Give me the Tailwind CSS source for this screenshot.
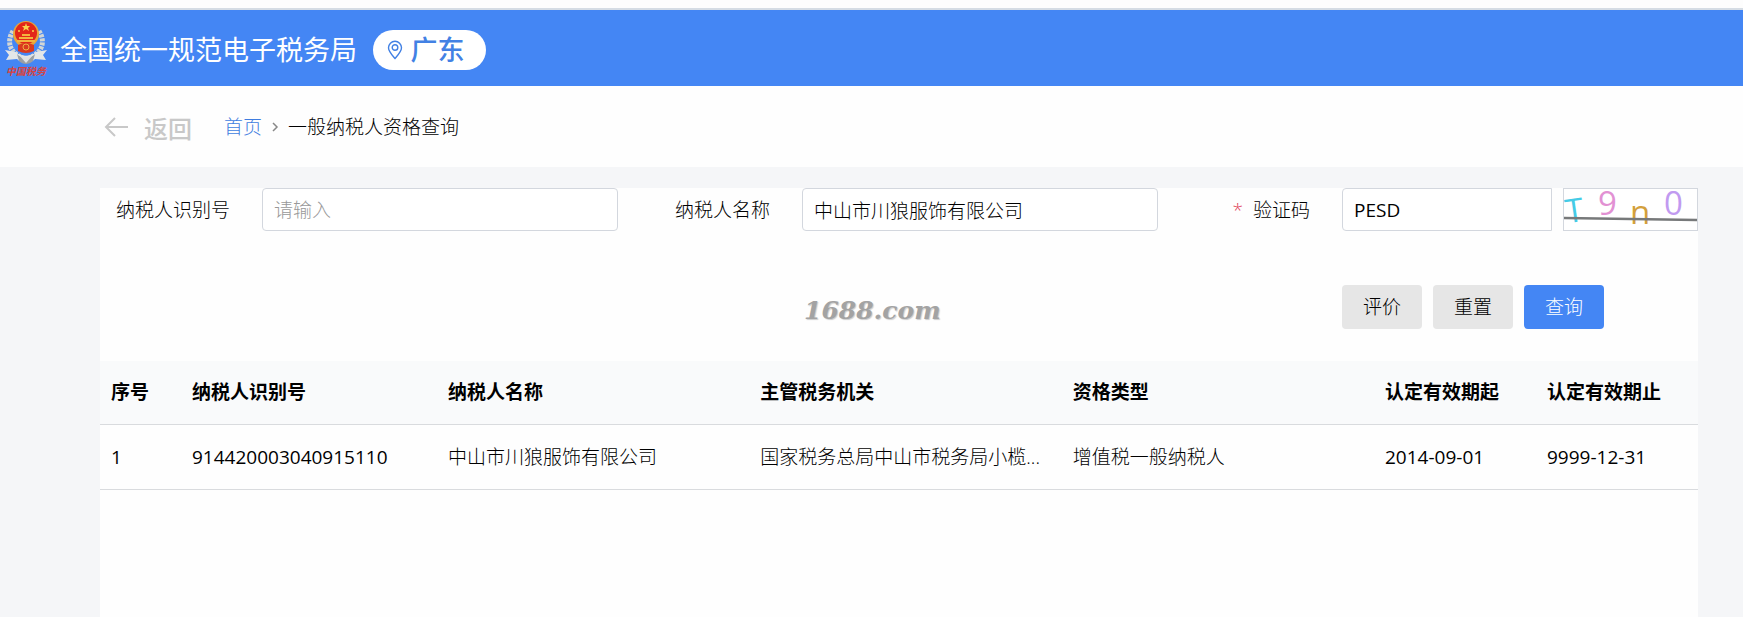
<!DOCTYPE html>
<html lang="zh-CN">
<head>
    <meta charset="UTF-8">
    <meta name="viewport" content="width=device-width, initial-scale=1">
    <title>一般纳税人资格查询</title>
    <script src="https://cdn.jsdelivr.net/npm/@tailwindcss/browser@4"></script>
</head>
<body class="min-h-screen flex flex-col bg-[#f5f6f8] font-['Open_Sans','Noto_Sans_CJK_SC',sans-serif] text-[19px] leading-7 text-black">
    <!-- 顶部 -->
    <header class="border-t-8 border-[#fdfdfd]">
        <div class="flex items-center h-[78px] pt-1 pl-1 border-t-2 border-[#d5dce4] bg-[#4486f4] text-white">
            <svg class="w-11 h-[60px] shrink-0 overflow-visible" viewBox="0 3 44 60" role="img" aria-label="中国税务">
                <g fill="none" stroke="#d3d6d4" stroke-width="5" stroke-dasharray="3 1">
                    <path d="M9 14C2 25 6 36 19 41"/>
                    <path d="M35 14C42 25 38 36 25 41"/>
                </g>
                <path d="M1 33l11 2c4 5 16 5 20 0l11-2-4 5 3 5-11-1c-5 5-13 5-18 0L2 43l3-5z" fill="#e4e7e8"/>
                <path d="M13 37c5 5 13 5 18 0l-2 7c-4 4-10 4-14 0z" fill="#9a9fa3"/>
                <path d="M15 38q7 4 14 0l-7 8z" fill="#dfe2e3"/>
                <circle cx="22" cy="17" r="13" fill="#e8a43a"/>
                <circle cx="22" cy="16" r="11" fill="#e32619"/>
                <path d="M22 6l1 3h3l-2 2 1 3-3-2-3 2 1-3-2-2h3z" fill="#f9d34c"/>
                <path d="M15 20h14v2H15zM18 17h8v2h-8zM13 23h18v2H13z" fill="#f3b33e"/>
                <circle cx="15" cy="14" r="1" fill="#f9d34c"/>
                <circle cx="29" cy="14" r="1" fill="#f9d34c"/>
                <path d="M14 28q8-4 16 0v6q-8 4-16 0z" fill="#d93a20"/>
                <circle cx="22" cy="30" r="3" fill="none" stroke="#f0b142"/>
                <text x="22" y="58" text-anchor="middle" font-size="10" font-weight="700" font-style="italic" fill="#d8433f">中国税务</text>
            </svg>
            <h1 class="ml-3 text-[27px] leading-10 whitespace-nowrap">全国统一规范电子税务局</h1>
            <button type="button" class="ml-4 h-10 w-[113px] pr-2 flex items-center justify-center gap-2 rounded-full bg-white text-[27px] font-medium text-[#4281e4]">
                <svg class="w-4 h-5" viewBox="0 0 16 20" fill="none" stroke="currentColor" stroke-width="1.4" aria-hidden="true">
                    <path d="M8 18.500C5 15 1.500 11.500 1.500 7.800a6.500 6.500 0 0 1 13 0C14.500 11.500 11 15 8 18.500z"/>
                    <circle cx="8" cy="7.500" r="2.800"/>
                </svg>
                广东
            </button>
        </div>
    </header>

    <!-- 返回、面包屑 -->
    <nav class="flex items-center h-[81px] pl-[104px] bg-[#fefefe]">
        <a href="#" class="flex items-center text-2xl font-medium text-[#c8c8c8]">
            <svg class="w-6 h-5 mr-4" viewBox="0 0 24 20" fill="none" stroke="currentColor" stroke-width="2" aria-hidden="true">
                <path d="M24 10H2M11 1L2 10l9 9"/>
            </svg>
            <span class="pt-1">返回</span>
        </a>
        <a href="#" class="ml-8 font-light text-[#3f7de0]">首页</a>
        <svg class="w-2 h-3 mx-[9px]" viewBox="0 0 8 12" fill="none" stroke="#888" stroke-width="1.5" aria-hidden="true">
            <path d="M2 2l4 4-4 4"/>
        </svg>
        <span class="font-light">一般纳税人资格查询</span>
    </nav>

    <main class="grow mt-[21px] ml-[100px] mr-[45px] bg-[#fefefe]">
        <!-- 查询条件 -->
        <form class="font-light">
            <div class="grid grid-cols-[162px_minmax(0,1fr)_184px_minmax(0,1fr)_184px_minmax(0,1fr)] items-center">
                <label for="taxNo" class="pr-8 text-right">纳税人识别号</label>
                <input id="taxNo" type="text" placeholder="请输入" class="w-full h-[43px] px-[11px] border border-[#d3d7de] rounded-sm bg-white placeholder:text-[#999]">
                <label for="taxName" class="pr-8 text-right">纳税人名称</label>
                <input id="taxName" type="text" value="中山市川狼服饰有限公司" class="w-full h-[43px] px-[11px] border border-[#d3d7de] rounded-sm bg-white">
                <label for="captcha" class="pr-8 text-right"><span class="mr-2.5 text-[#e0435a]">*</span>验证码</label>
                <div class="flex gap-[11px]">
                    <input id="captcha" type="text" value="PESD" class="grow min-w-0 h-[43px] px-[11px] border border-[#d3d7de] rounded-l-sm bg-white font-normal">
                    <svg class="w-[135px] h-[43px] shrink-0 border border-[#d3d7de] bg-white overflow-visible font-medium" viewBox="0 0 133 41" font-size="33" role="img" aria-label="验证码图片">
                        <text x="1" y="33" fill="#45cbe6" transform="rotate(-8 10 20)">T</text>
                        <text x="34" y="26" fill="#e291d3">9</text>
                        <text x="66" y="35" fill="#d3a03c">n</text>
                        <text x="100" y="26" fill="#c19af0">0</text>
                        <path d="M0 29l133 2" stroke="#77797a" stroke-width="2.500"/>
                    </svg>
                </div>
            </div>
            <div class="grid grid-cols-[704px_1fr_356px] items-center mt-[54px]">
                <span class="col-start-2 pt-2 font-['DejaVu_Serif'] text-[25px] italic font-bold text-[#a3a3a3] text-shadow-[1px_1px_1px_#ccc]">1688.com</span>
                <div class="flex gap-[11px]">
                    <button type="button" class="w-20 h-11 rounded-sm bg-[#e6e6e6]">评价</button>
                    <button type="reset" class="w-20 h-11 rounded-sm bg-[#e6e6e6]">重置</button>
                    <button type="submit" class="w-20 h-11 rounded-sm bg-[#4486f4] text-white">查询</button>
                </div>
            </div>
        </form>

        <!-- 查询结果 -->
        <table class="w-full mt-8 table-fixed text-left">
            <colgroup>
                <col class="w-[81px]">
                <col class="w-64">
                <col>
                <col>
                <col>
                <col class="w-[162px]">
                <col class="w-[162px]">
            </colgroup>
            <thead class="bg-[#f9fafb]">
                <tr class="h-[63px] border-b border-[#d9dbde]">
                    <th class="px-[11px]">序号</th>
                    <th class="px-[11px]">纳税人识别号</th>
                    <th class="px-[11px]">纳税人名称</th>
                    <th class="px-[11px]">主管税务机关</th>
                    <th class="px-[11px]">资格类型</th>
                    <th class="px-[11px]">认定有效期起</th>
                    <th class="px-[11px]">认定有效期止</th>
                </tr>
            </thead>
            <tbody class="font-light">
                <tr class="h-[65px] border-b border-[#d9dbde]">
                    <td class="px-[11px] font-normal">1</td>
                    <td class="px-[11px] font-normal">914420003040915110</td>
                    <td class="px-[11px]">中山市川狼服饰有限公司</td>
                    <td class="px-[11px] whitespace-nowrap">国家税务总局中山市税务局小榄...</td>
                    <td class="px-[11px]">增值税一般纳税人</td>
                    <td class="px-[11px] font-normal">2014-09-01</td>
                    <td class="px-[11px] font-normal">9999-12-31</td>
                </tr>
            </tbody>
        </table>
    </main>
</body>
</html>
